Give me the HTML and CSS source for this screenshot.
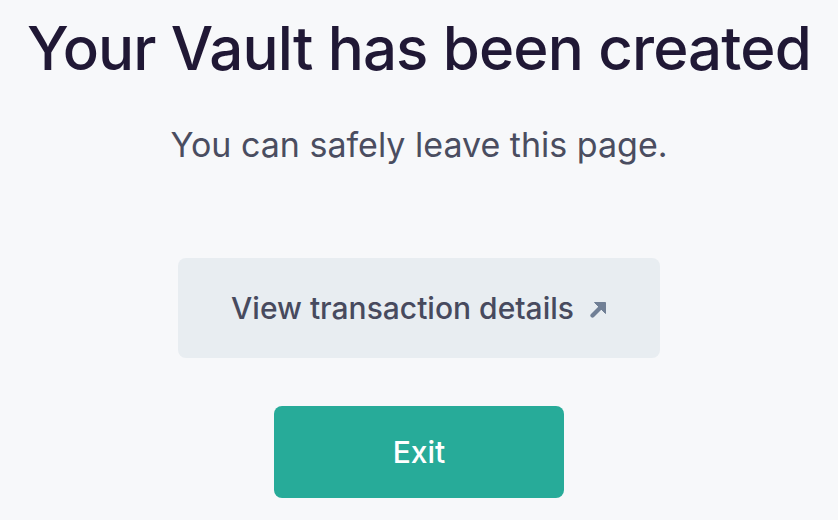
FILE: index.html
```html
<!DOCTYPE html>
<html>
<head>
<meta charset="utf-8">
<link rel="stylesheet" href="styles.css">
</head>
<body>
<main class="page">
  <h1 class="title">Your Vault has been created</h1>
  <p class="subtitle">You can safely leave this page.</p>
  <a class="details-btn" href="#">
    <span>View transaction details</span>
    <svg class="arrow" width="17" height="17" viewBox="0 0 17 17"><path d="M2.5 14.5 L10 7" stroke="#718096" stroke-width="4.2" stroke-linecap="round" fill="none"/><path d="M4.5 1.5 H15.5 V12.5 Z" fill="#718096" stroke="#718096" stroke-width="1" stroke-linejoin="round"/></svg>
  </a>
  <button class="exit-btn">Exit</button>
</main>
</body>
</html>
```
FILE: styles.css
```css
html, body {
  margin: 0;
  padding: 0;
  background: #f7f8fa;
}
.page {
  width: 838px;
  height: 520px;
  display: flex;
  flex-direction: column;
  align-items: center;
  font-family: Inter, "Noto Sans", sans-serif;
  overflow: hidden;
}
.title {
  margin: 12px 0 0;
  font-size: 60px;
  font-weight: 500;
  letter-spacing: -0.85px;
  line-height: 72px;
  color: #201835;
}
.subtitle {
  margin: 40px 0 0;
  font-size: 34px;
  line-height: 42px;
  font-weight: 400;
  color: #4a4d60;
}
.details-btn {
  margin-top: 92px;
  width: 482px;
  height: 100px;
  box-sizing: border-box;
  background: #e8edf1;
  border-radius: 8px;
  display: flex;
  align-items: center;
  justify-content: center;
  gap: 16px;
  text-decoration: none;
  font-size: 30px;
  font-weight: 500;
  color: #474a5e;
}
.arrow {
  margin-top: 3px;
}
.exit-btn {
  margin-top: 48px;
  width: 290px;
  height: 92px;
  border: none;
  border-radius: 8px;
  background: #27ab99;
  color: #ffffff;
  font-family: Inter, "Noto Sans", sans-serif;
  font-size: 30px;
  font-weight: 500;
}
```
